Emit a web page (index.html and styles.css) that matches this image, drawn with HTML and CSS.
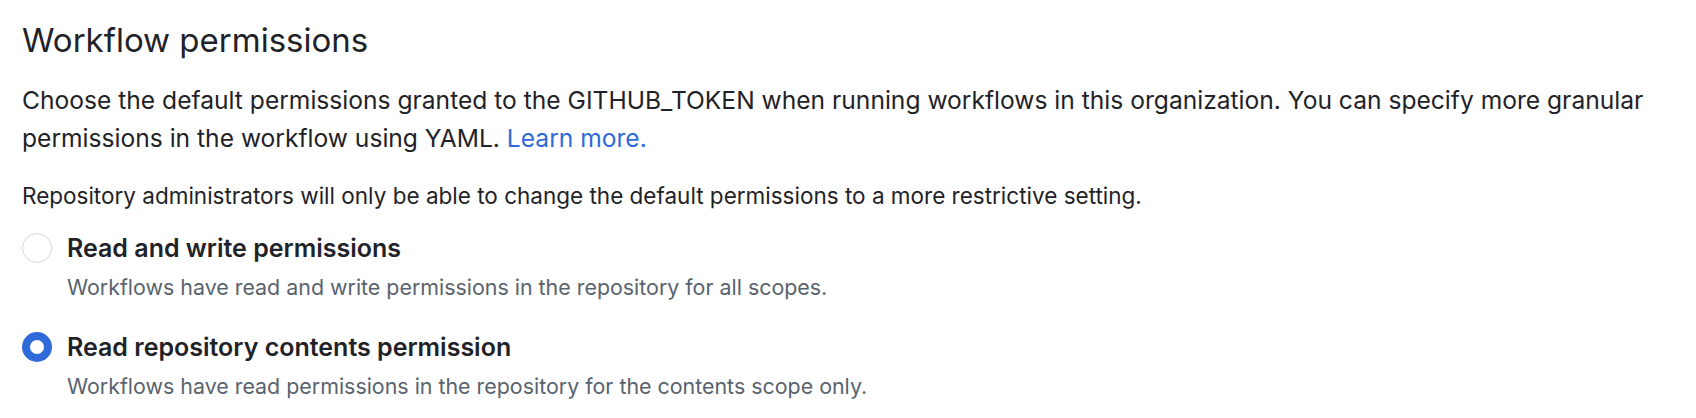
FILE: index.html
```html
<!DOCTYPE html>
<html lang="en">
<head>
<meta charset="utf-8">
<title>Workflow permissions</title>
<link rel="stylesheet" href="styles.css">
</head>
<body>
<section class="settings">
  <h2 class="settings-title">Workflow permissions</h2>
  <p class="settings-text">Choose the default permissions granted to the GITHUB_TOKEN when running workflows in this organization. You can specify more granular permissions in the workflow using YAML. <a class="link" href="#">Learn more.</a></p>
  <p class="settings-note">Repository administrators will only be able to change the default permissions to a more restrictive setting.</p>
  <div class="options">
    <label class="option">
      <span class="radio"></span>
      <span class="option-body">
        <span class="option-label">Read and write permissions</span>
        <span class="option-note">Workflows have read and write permissions in the repository for all scopes.</span>
      </span>
    </label>
    <label class="option">
      <span class="radio radio-checked"></span>
      <span class="option-body">
        <span class="option-label">Read repository contents permission</span>
        <span class="option-note">Workflows have read permissions in the repository for the contents scope only.</span>
      </span>
    </label>
  </div>
</section>
</body>
</html>
```
FILE: styles.css
```css
html, body {
  margin: 0;
  padding: 0;
  background: #ffffff;
}

body {
  font-family: Inter, "Noto Sans", "Liberation Sans", sans-serif;
  color: #1f2328;
}

.settings {
  padding: 15px 22px 0 22px;
}

.settings-title {
  margin: 0 0 17px 0;
  font-size: 33px;
  font-weight: 400;
  line-height: 50px;
}

.settings-text {
  margin: 0 0 22px 0;
  font-size: 24.6px;
  line-height: 37.5px;
}

.settings-note {
  margin: 0 0 16px 0;
  font-size: 22.5px;
  line-height: 34px;
}

.link {
  color: #2e6ad9;
  text-decoration: none;
}

.options {
  display: flex;
  flex-direction: column;
  gap: 25px;
}

.option {
  display: flex;
  align-items: flex-start;
  gap: 15px;
}

.radio {
  flex: none;
  box-sizing: border-box;
  width: 30px;
  height: 30px;
  margin-top: 4px;
  border: 1.8px solid #d1d9e0;
  border-radius: 50%;
  background: #ffffff;
}

.radio-checked {
  border: 8.5px solid #2e6ad9;
}

.option-body {
  display: flex;
  flex-direction: column;
  gap: 4px;
}

.option-label {
  font-size: 25px;
  font-weight: 600;
  line-height: 38px;
}

.option-note {
  font-size: 21.4px;
  line-height: 32px;
  color: #59636e;
}
```
